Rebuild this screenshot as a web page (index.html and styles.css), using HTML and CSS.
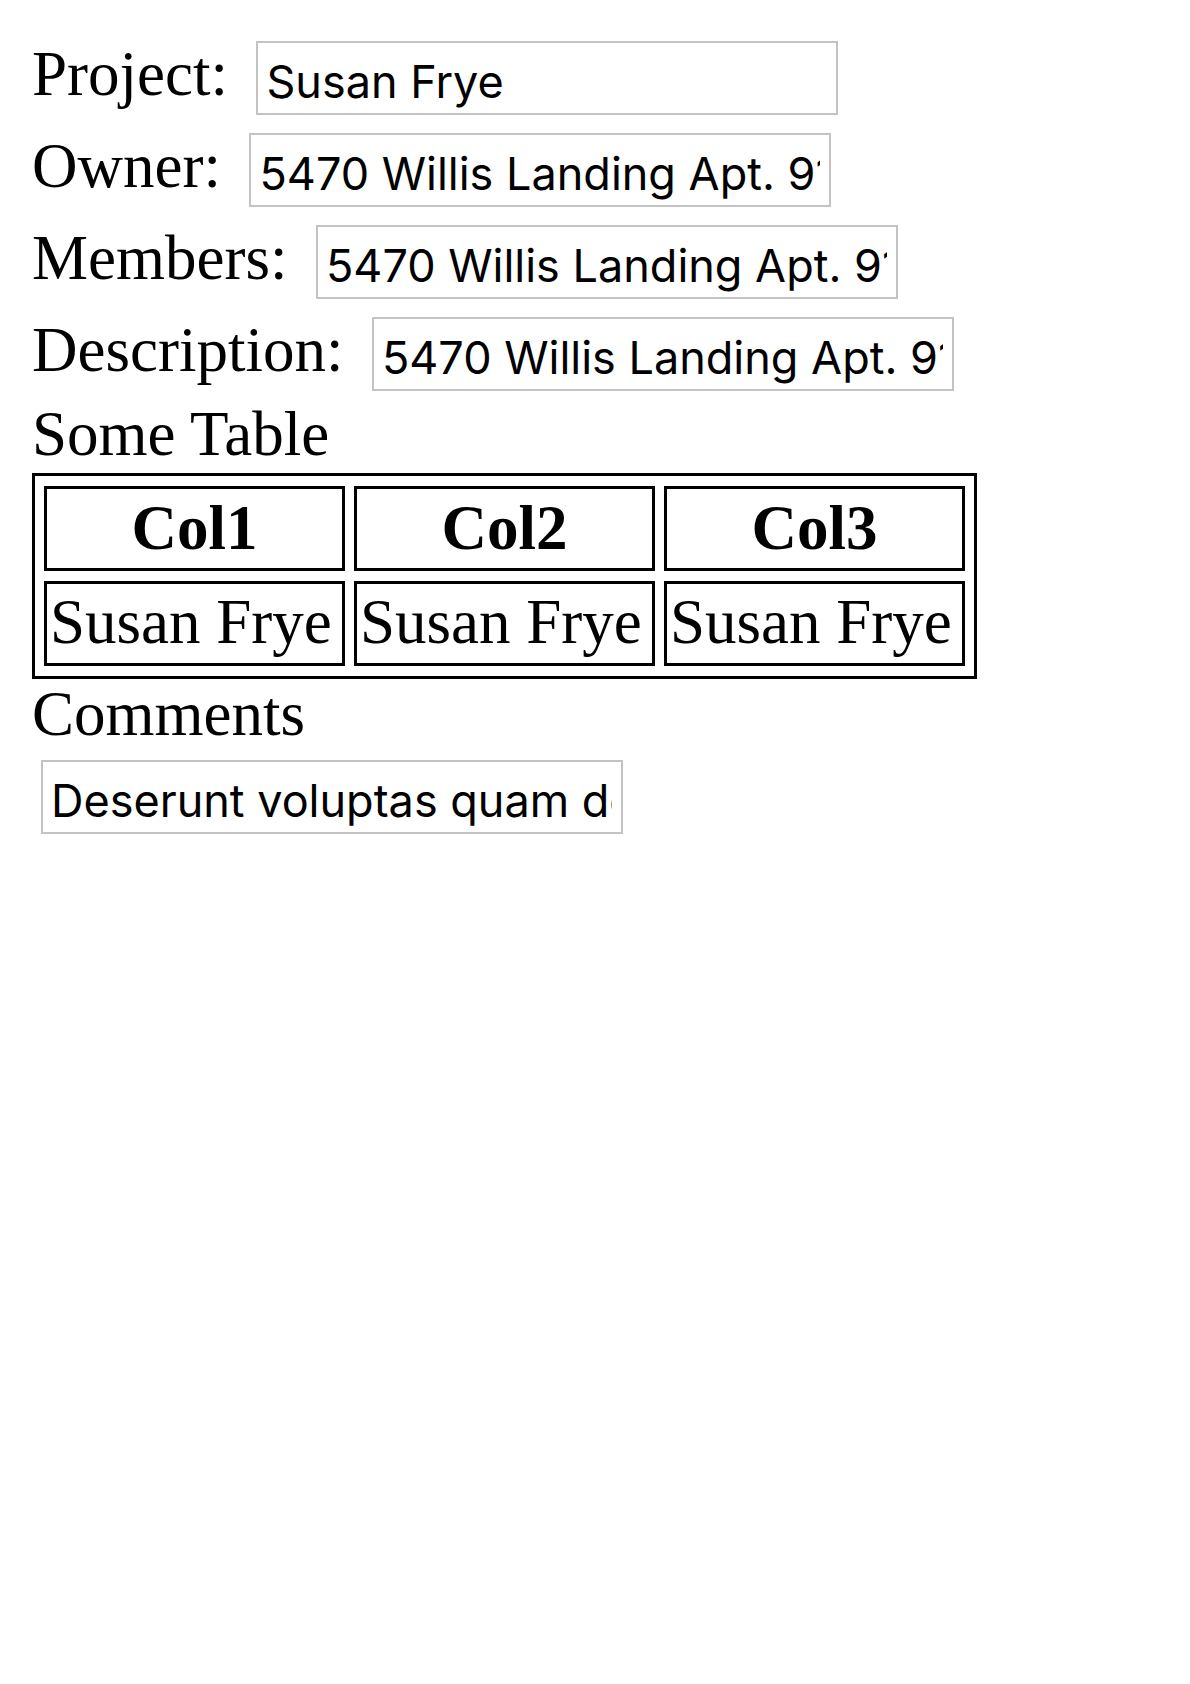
FILE: index.html
```html
<!DOCTYPE html>
<html lang="en">
<head>
<meta charset="utf-8">
<title>Project</title>
<link rel="stylesheet" href="styles.css">
</head>
<body>
<div class="page">
  <div class="field"><span class="label">Project:</span><input class="box" type="text" value="Susan Frye"></div>
  <div class="field"><span class="label">Owner:</span><input class="box" type="text" value="5470 Willis Landing Apt. 917"></div>
  <div class="field"><span class="label">Members:</span><input class="box" type="text" value="5470 Willis Landing Apt. 917"></div>
  <div class="field"><span class="label">Description:</span><input class="box" type="text" value="5470 Willis Landing Apt. 917"></div>
  <div class="heading heading-table">Some Table</div>
  <table class="grid">
    <thead>
      <tr><th>Col1</th><th>Col2</th><th>Col3</th></tr>
    </thead>
    <tbody>
      <tr><td>Susan Frye</td><td>Susan Frye</td><td>Susan Frye</td></tr>
    </tbody>
  </table>
  <div class="heading heading-comments">Comments</div>
  <div class="comments"><input class="box box-comments" type="text" value="Deserunt voluptas quam deleniti"></div>
</div>
</body>
</html>
```
FILE: styles.css
```css
html, body {
  margin: 0;
  background: #fff;
}
body {
  color: #000;
  font-family: "Liberation Serif", "Times New Roman", serif;
}
.page {
  padding: 32px 0 0 32px;
}
.field {
  display: flex;
  align-items: flex-start;
  height: 92px;
}
.label {
  font-size: 63px;
  line-height: 84px;
  margin-right: 28.5px;
  white-space: nowrap;
}
.box {
  box-sizing: border-box;
  width: 582px;
  height: 74px;
  margin: 9px 0 0 0;
  border: 2px solid #c3c3c3;
  border-radius: 0;
  padding: 6px 9px 0 8px;
  font-family: Inter, "Liberation Sans", sans-serif;
  font-size: 45px;
  line-height: 53px;
  color: #000;
  background: #fff;
  outline: none;
  -webkit-appearance: none;
  appearance: none;
}
.box-comments {
  margin-top: 0;
}
.heading {
  font-size: 63px;
}
.heading-table {
  line-height: 68px;
  margin-bottom: 5px;
}
.grid {
  border: 3px solid #000;
  border-spacing: 9px 10px;
}
.grid th,
.grid td {
  box-sizing: border-box;
  width: 301px;
  border: 3px solid #000;
  font-size: 63px;
  padding: 0 3px;
  white-space: nowrap;
}
.grid th {
  line-height: 79px;
  font-weight: bold;
  text-align: center;
}
.grid td {
  line-height: 77px;
  padding-bottom: 2px;
  text-align: left;
}
.heading-comments {
  line-height: 64px;
  margin-top: 3px;
}
.comments {
  padding: 14px 0 0 9px;
}
```
